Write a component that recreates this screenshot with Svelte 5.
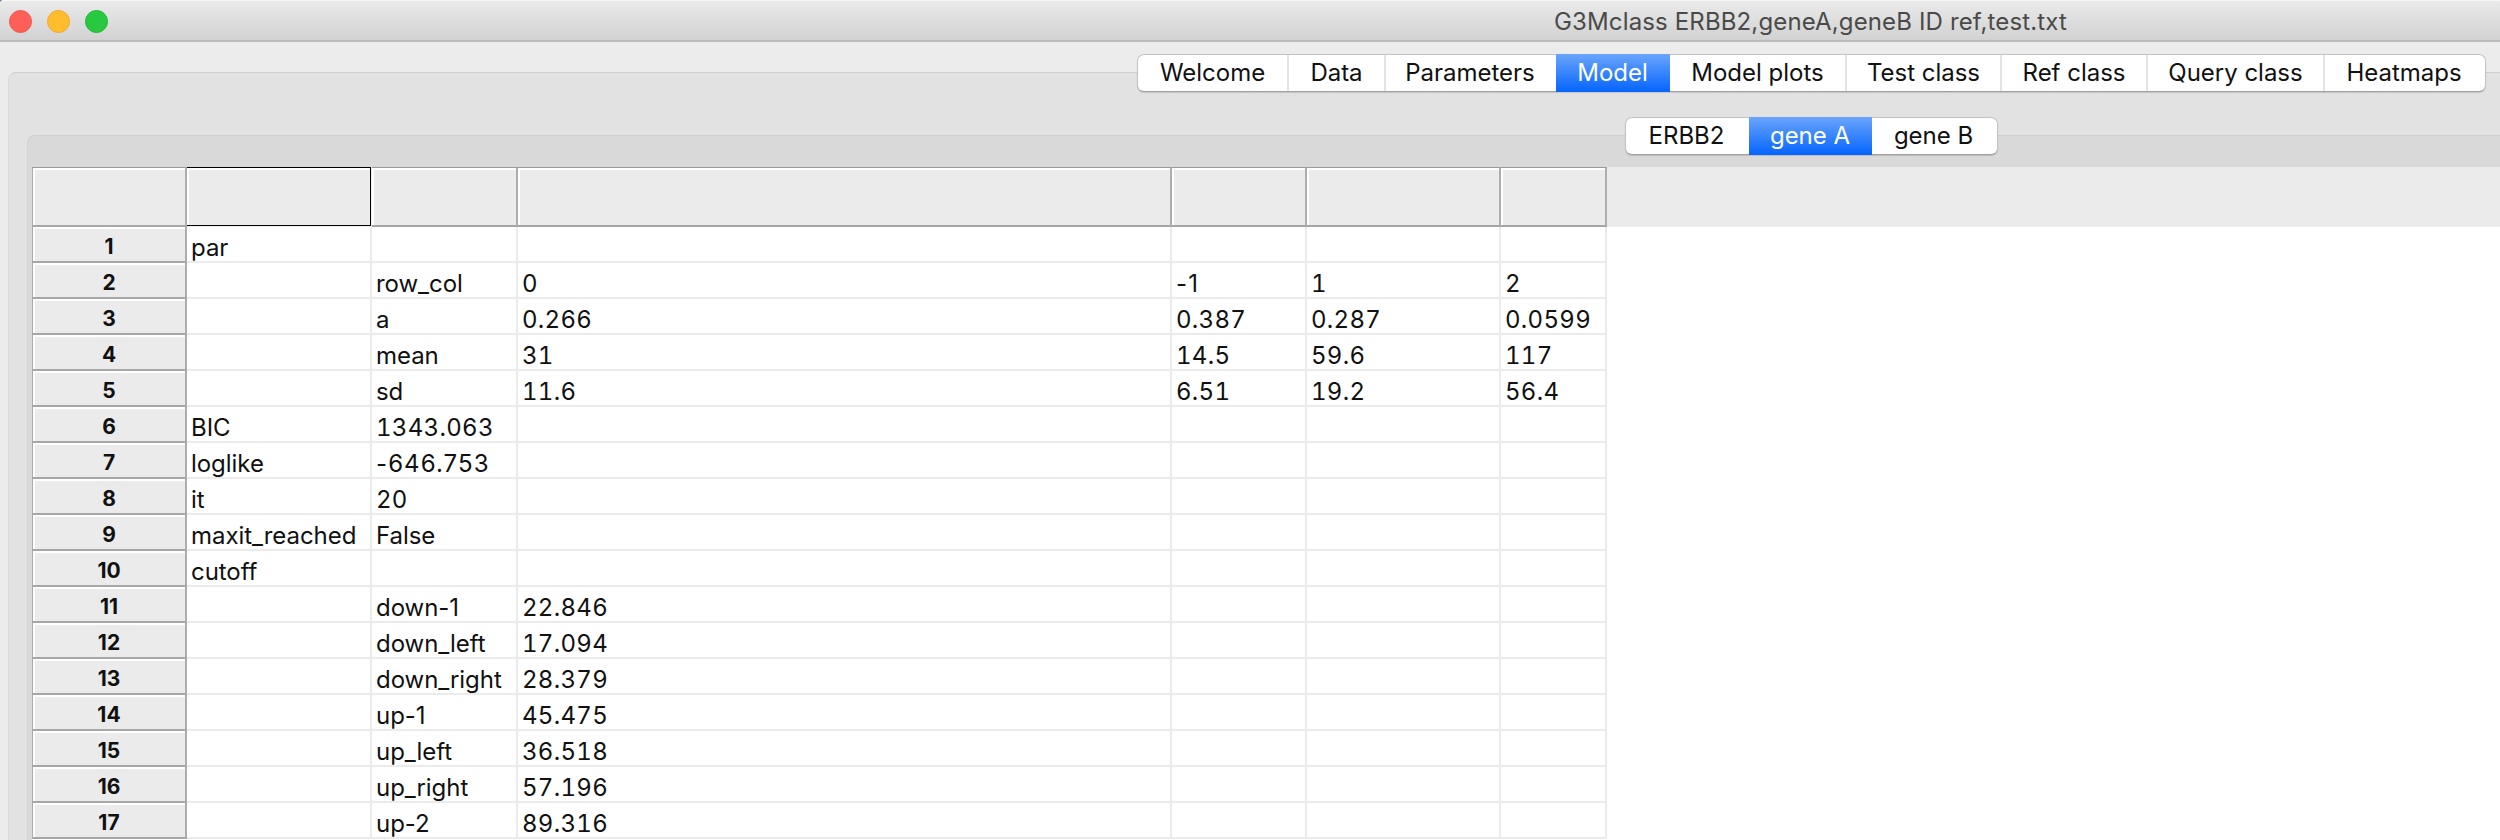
<script>
  const tabs = [
    ['Welcome', 151], ['Data', 97], ['Parameters', 170], ['Model', 114], ['Model plots', 177],
    ['Test class', 155], ['Ref class', 146], ['Query class', 177], ['Heatmaps', 160]
  ];
  const genes = [['ERBB2', 123], ['gene A', 123], ['gene B', 125]];
  const rows = [
    ['par'],
    ['', 'row_col', '0', '-1', '1', '2'],
    ['', 'a', '0.266', '0.387', '0.287', '0.0599'],
    ['', 'mean', '31', '14.5', '59.6', '117'],
    ['', 'sd', '11.6', '6.51', '19.2', '56.4'],
    ['BIC', '1343.063'],
    ['loglike', '-646.753'],
    ['it', '20'],
    ['maxit_reached', 'False'],
    ['cutoff'],
    ['', 'down-1', '22.846'],
    ['', 'down_left', '17.094'],
    ['', 'down_right', '28.379'],
    ['', 'up-1', '45.475'],
    ['', 'up_left', '36.518'],
    ['', 'up_right', '57.196'],
    ['', 'up-2', '89.316']
  ];
  const cols = [0, 1, 2, 3, 4, 5];
  const isNumber = (v) => /^[\d.]+$/.test(v ?? '');
  const isNegative = (v) => /^-[\d.]+$/.test(v ?? '');
  let tab = $state('Model');
  let gene = $state('gene A');
</script>

<div class="window">
  <header class="titlebar">
    <div class="lights">
      <span class="light close"></span><span class="light minimize"></span><span class="light zoom"></span>
    </div>
    <div class="title">G3Mclass ERBB2,geneA,geneB ID ref,test.txt</div>
  </header>

  <div class="body">
    <div class="tabs main-tabs">
      {#each tabs as [label, w]}
        <button class:active={tab === label} style:width="{w}px" onclick={() => (tab = label)}>{label}</button>
      {/each}
    </div>

    <section class="panel outer">
      <div class="tabs gene-tabs">
        {#each genes as [label, w]}
          <button class:active={gene === label} style:width="{w}px" onclick={() => (gene = label)}>{label}</button>
        {/each}
      </div>
      <section class="panel inner">
        <div class="sheet">
          <div class="headrow">
            <div class="grid head">
              <div class="hcell corner"></div>
              {#each cols as c}<div class="hcell" class:current={c === 0}></div>{/each}
            </div>
          </div>
          {#each rows as row, i}
            <div class="grid row">
              <div class="hcell num">{i + 1}</div>
              {#each cols as c}
                <div class="cell" class:digits={isNumber(row[c])} class:negative={isNegative(row[c])}>{row[c] ?? ''}</div>
              {/each}
            </div>
          {/each}
        </div>
      </section>
    </section>
  </div>
</div>

<style>
  :global(body) { margin: 0; overflow: hidden; }
  .window {
    width: 2500px; height: 840px; overflow: hidden; box-sizing: border-box;
    background: #3f5f86; font-family: Inter, "Liberation Sans", sans-serif; color: #111;
    display: flex; flex-direction: column;
  }
  .titlebar {
    height: 42px; flex: none; box-sizing: border-box; display: flex; align-items: center;
    border-top: 1px solid #f6f6f6; border-bottom: 2px solid #bcbcbc; border-top-left-radius: 3px;
    background: linear-gradient(#eaeaea, #d2d2d2);
  }
  .lights { display: flex; gap: 15px; padding-left: 9px; width: 1554px; box-sizing: border-box; padding-top: 1px; }
  .light { width: 23px; height: 23px; border-radius: 50%; box-sizing: border-box; border: 1px solid; }
  .close { background: #ff5f57; border-color: #f0544d; }
  .minimize { background: #ffbd2e; border-color: #f0a92a; }
  .zoom { background: #28c940; border-color: #1fb935; }
  .title { font-size: 24px; line-height: 38px; letter-spacing: 0.14px; color: #4a4a4a; white-space: nowrap; padding-top: 3px; }

  .body { flex: 1; display: flex; flex-direction: column; background: #ececec; }
  .tabs {
    display: flex; height: 38px; box-sizing: border-box; width: max-content; position: relative; z-index: 1;
    background: #fff; border: 1px solid #c3c3c3; border-bottom-color: #a0a0a0; border-radius: 7px;
    box-shadow: 0 1px 1px #0002;
  }
  .tabs button {
    border: 0; padding: 0; margin: 0; background: none; font: inherit; font-size: 24px; line-height: 36px;
    letter-spacing: -0.02px; color: #111; text-align: center; white-space: nowrap;
    border-right: 2px solid #e4e4e4; box-sizing: border-box; height: 36px;
  }
  .tabs button:last-child, .tabs button:has(+ .active) { border-right-color: transparent; }
  .tabs button.active {
    background: linear-gradient(#6aa5fc, #0564ff); color: #fff; border: 0;
    height: 38px; margin-top: -1px; line-height: 38px; padding-right: 1px;
  }
  .main-tabs { margin: 12px 0 0 1137px; }
  .gene-tabs { margin: 44px 0 0 1616px; }

  .panel { box-sizing: border-box; border: 1px solid #cfcfcf; border-right: 0; border-bottom: 0; border-radius: 8px 0 0 0; }
  .outer { margin: -20px 0 0 8px; height: 768px; background: #e2e2e2; flex: none; border-left-color: #dadada; }
  .inner { margin: -20px 0 0 18px; height: 705px; background: #d9d9d9; border-left-color: #d2d2d2; padding: 31px 0 0 4px; }

  .sheet { background: #fff; height: 673px; overflow: hidden; }
  .headrow { background: #ebebeb; height: 60px; }
  .grid { display: grid; grid-template-columns: 155px 185px 146px 654px 135px 194px 106px; width: 1575px; }
  .head { grid-template-rows: 60px; }
  .row { grid-template-rows: 36px; }
  .hcell {
    box-sizing: border-box; background: #ebebeb; border-top: 1px solid #999; border-right: 2px solid #adadad;
    border-bottom: 2px solid #a6a6a6; box-shadow: inset 2px 2px #fff;
  }
  .current { border-color: #000; border-right-width: 1px; border-bottom-width: 1px; margin: 0 1px 1px 0; }
  .corner { border-left: 1px solid #aaa; }
  .num {
    border-top: 0; border-left: 1px solid #aaa; font-size: 21px; font-weight: 700; line-height: 40px; text-align: center;
    height: 36px; overflow: hidden;
  }
  .cell {
    box-sizing: border-box; height: 36px; border-right: 2px solid #ebebeb; border-bottom: 2px solid #ebebeb;
    padding-left: 4px; font-size: 24px; line-height: 41px; letter-spacing: -0.05px; white-space: nowrap; overflow: hidden;
  }
  .digits { letter-spacing: 0.3px; font-feature-settings: "tnum"; }
  .negative { letter-spacing: 1.1px; }
</style>
